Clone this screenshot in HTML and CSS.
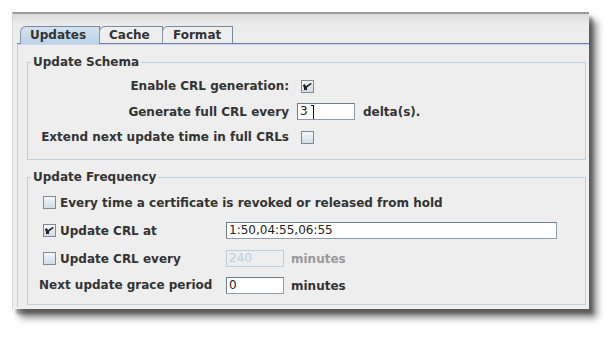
FILE: index.html
```html
<!DOCTYPE html>
<html lang="en">
<head>
    <meta charset="UTF-8">
    <title>CRL Settings</title>
    <link rel="stylesheet" href="styles.css">
</head>
<body>
    <div class="window">
        <div class="tabs">
            <div class="tab active">Updates</div>
            <div class="tab tab-cache">Cache</div>
            <div class="tab tab-format">Format</div>
        </div>
        <div class="tab-body">
            <fieldset class="group">
                <legend>Update Schema</legend>
                <div class="schema">
                    <span class="label">Enable CRL generation:</span>
                    <span class="ctrl"><span class="check on"></span></span>
                    <span class="label">Generate full CRL every</span>
                    <span class="ctrl">
                        <span class="field short cursor-field">3<span class="ibeam"></span></span>
                        <span class="unit">delta(s).</span>
                    </span>
                    <span class="label">Extend next update time in full CRLs</span>
                    <span class="ctrl"><span class="check"></span></span>
                </div>
            </fieldset>
            <fieldset class="group freq">
                <legend>Update Frequency</legend>
                <div class="frequency">
                    <span class="option wide"><span class="check"></span>Every time a certificate is revoked or released from hold</span>
                    <span class="option"><span class="check on"></span>Update CRL at</span>
                    <span class="ctrl"><span class="field long">1:50,04:55,06:55</span></span>
                    <span class="option"><span class="check"></span>Update CRL every</span>
                    <span class="ctrl">
                        <span class="field short disabled">240</span>
                        <span class="unit muted">minutes</span>
                    </span>
                    <span class="label-left">Next update grace period</span>
                    <span class="ctrl">
                        <span class="field short">0</span>
                        <span class="unit">minutes</span>
                    </span>
                </div>
            </fieldset>
        </div>
    </div>
</body>
</html>
```

FILE: styles.css
```css
body {
    margin: 0;
    min-height: 337px;
    background: #fff;
    font-family: "DejaVu Sans", Verdana, sans-serif;
    font-size: 12px;
    font-weight: bold;
    color: #333;
    overflow: hidden;
}
.window {
    box-sizing: border-box;
    width: 577px;
    height: 297px;
    margin: 0 0 0 12px;
    position: relative;
    top: 12px;
    padding-left: 4px;
    border-top: 2px solid #9c9c9c;
    border-left: 1px dotted #c4c4c4;
    background: linear-gradient(#dadada, #ebebeb 10px, #eeeeee 30px);
    box-shadow: 4px 5px 3px rgba(0, 0, 0, 0.35), 8px 9px 7px rgba(0, 0, 0, 0.45);
}
.tabs {
    display: flex;
    padding-top: 12px;
    padding-left: 3px;
    border-bottom: 1px solid #6e7f99;
    height: 17px;
}
.tab {
    box-sizing: border-box;
    height: 17px;
    line-height: 16px;
    padding-left: 9px;
    border: 1px solid #7a8aa5;
    border-bottom: none;
    border-left-color: #8797b0;
    border-top-left-radius: 6px;
    background: #eeeeee;
    width: 64px;
    margin-right: -1px;
}
.tab.active {
    width: 80px;
    background: linear-gradient(#d4e2f0, #bcd2e8);
    height: 18px;
}
.tab-format {
    width: 71px;
    padding-left: 10px;
}
.tab-body {
    box-sizing: border-box;
    height: 263px;
    border-left: 1px solid #b8cfe5;
    border-top: 1px solid #c8d8ea;
    background: #eeeeee;
    padding: 10px 3px 0 9px;
}
.group {
    margin: 0;
    padding: 0;
    border: 1px solid #b8cfe5;
}
.group legend {
    padding: 0 2px;
    margin-left: 3px;
    line-height: 15px;
}
.freq {
    margin-top: 10px;
}
.schema {
    display: grid;
    grid-template-columns: 261px 1fr;
    grid-auto-rows: 22px;
    column-gap: 8px;
    row-gap: 3.5px;
    padding: 5px 0 10.5px;
}
.label {
    text-align: right;
    line-height: 22px;
    white-space: nowrap;
}
.label-left {
    line-height: 22px;
    white-space: nowrap;
}
.ctrl {
    display: flex;
    align-items: center;
}
.schema .check {
    margin-left: 4px;
}
.frequency {
    display: grid;
    grid-template-columns: 187px 1fr;
    grid-template-rows: 22px 22px 22px 22px;
    row-gap: 6px;
    padding: 7px 0 6px 11px;
}
.frequency .label-left {
    margin-top: -2px;
}
.frequency .ctrl:last-child {
    margin-top: -2px;
}
.option {
    display: flex;
    align-items: center;
    gap: 4px;
    padding-left: 4px;
    white-space: nowrap;
}
.option.wide {
    grid-column: 1 / 3;
}
.check {
    box-sizing: border-box;
    display: inline-block;
    position: relative;
    width: 13px;
    height: 13px;
    border: 1px solid #7a8a99;
    background: linear-gradient(#f4f8fc, #cfdbe8);
}
.check.on::after {
    content: "";
    position: absolute;
    left: 3px;
    top: 3px;
    width: 5px;
    height: 3px;
    border-left: 2px solid #222;
    border-bottom: 2px solid #222;
    transform: skewX(-20deg) rotate(-45deg);
    transform-origin: 0 100%;
}
.check.on::before {
    content: "";
    position: absolute;
    left: 2px;
    top: 6px;
    width: 3px;
    height: 3px;
    background: #222;
}
.field {
    box-sizing: border-box;
    display: inline-block;
    height: 17px;
    line-height: 15px;
    padding-left: 2px;
    border: 1px solid #8e9cab;
    border-top-color: #6d7d8e;
    border-left-color: #6d7d8e;
    background: #fff;
    font-weight: normal;
    color: #222;
    font-size: 12px;
}
.field.short {
    width: 58px;
}
.field.long {
    width: 331px;
}
.field.disabled {
    background: #eeeeee;
    border-color: #b8cfe5;
    color: #b8cfe5;
}
.cursor-field {
    position: relative;
}
.ibeam {
    position: absolute;
    left: 15px;
    top: 1px;
    width: 1px;
    height: 14px;
    background: #111;
}
.ibeam::before {
    content: "";
    position: absolute;
    left: -2px;
    top: 0;
    width: 3px;
    height: 1px;
    background: #111;
}
.unit {
    margin-left: 8px;
}
.frequency .unit {
    margin-left: 7px;
}
.unit.muted {
    color: #9a9a9a;
}
```
